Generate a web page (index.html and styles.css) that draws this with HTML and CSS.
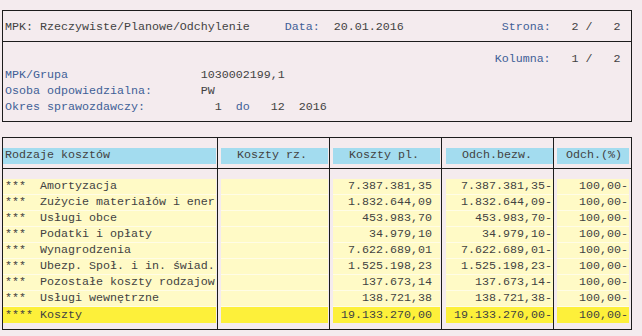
FILE: index.html
```html
<!DOCTYPE html>
<html lang="pl">
<head>
<meta charset="utf-8">
<title>MPK: Rzeczywiste/Planowe/Odchylenie</title>
<link rel="stylesheet" href="styles.css">
</head>
<body>
<section class="hdr">
  <div class="hdr-title"><span>MPK: Rzeczywiste/Planowe/Odchylenie     </span><span class="lbl">Data:</span><span>  20.01.2016              </span><span class="lbl">Strona:</span><span>   2 /   2</span></div>
  <div class="hdr-body">
    <div class="line"><span>                                                                      </span><span class="lbl">Kolumna:</span><span>   1 /   2</span></div>
    <div class="line"><span class="lbl">MPK/Grupa                   </span><span>1030002199,1</span></div>
    <div class="line"><span class="lbl">Osoba odpowiedzialna:       </span><span>PW</span></div>
    <div class="line"><span class="lbl">Okres sprawozdawczy:</span><span>          1  </span><span class="lbl">do</span><span>   12  2016</span></div>
  </div>
</section>

<table class="rep">
  <thead>
    <tr>
      <th class="c1"><div class="cell hd">Rodzaje kosztów</div></th>
      <th class="c2"><div class="cell hd">  Koszty rz.</div></th>
      <th class="c3"><div class="cell hd">  Koszty pl.</div></th>
      <th class="c4"><div class="cell hd">  Odch.bezw.</div></th>
      <th class="c5"><div class="cell hd"> Odch.(%)</div></th>
    </tr>
  </thead>
  <tbody>
    <tr><td class="c1"><div class="cell">***  Amortyzacja</div></td><td class="c2"><div class="cell"></div></td><td class="c3"><div class="cell num">7.387.381,35 </div></td><td class="c4"><div class="cell num">7.387.381,35-</div></td><td class="c5"><div class="cell num">100,00-</div></td></tr>
    <tr><td class="c1"><div class="cell">***  Zużycie materiałów i ener</div></td><td class="c2"><div class="cell"></div></td><td class="c3"><div class="cell num">1.832.644,09 </div></td><td class="c4"><div class="cell num">1.832.644,09-</div></td><td class="c5"><div class="cell num">100,00-</div></td></tr>
    <tr><td class="c1"><div class="cell">***  Usługi obce</div></td><td class="c2"><div class="cell"></div></td><td class="c3"><div class="cell num">453.983,70 </div></td><td class="c4"><div class="cell num">453.983,70-</div></td><td class="c5"><div class="cell num">100,00-</div></td></tr>
    <tr><td class="c1"><div class="cell">***  Podatki i opłaty</div></td><td class="c2"><div class="cell"></div></td><td class="c3"><div class="cell num">34.979,10 </div></td><td class="c4"><div class="cell num">34.979,10-</div></td><td class="c5"><div class="cell num">100,00-</div></td></tr>
    <tr><td class="c1"><div class="cell">***  Wynagrodzenia</div></td><td class="c2"><div class="cell"></div></td><td class="c3"><div class="cell num">7.622.689,01 </div></td><td class="c4"><div class="cell num">7.622.689,01-</div></td><td class="c5"><div class="cell num">100,00-</div></td></tr>
    <tr><td class="c1"><div class="cell">***  Ubezp. Społ. i in. świad.</div></td><td class="c2"><div class="cell"></div></td><td class="c3"><div class="cell num">1.525.198,23 </div></td><td class="c4"><div class="cell num">1.525.198,23-</div></td><td class="c5"><div class="cell num">100,00-</div></td></tr>
    <tr><td class="c1"><div class="cell">***  Pozostałe koszty rodzajow</div></td><td class="c2"><div class="cell"></div></td><td class="c3"><div class="cell num">137.673,14 </div></td><td class="c4"><div class="cell num">137.673,14-</div></td><td class="c5"><div class="cell num">100,00-</div></td></tr>
    <tr><td class="c1"><div class="cell">***  Usługi wewnętrzne</div></td><td class="c2"><div class="cell"></div></td><td class="c3"><div class="cell num">138.721,38 </div></td><td class="c4"><div class="cell num">138.721,38-</div></td><td class="c5"><div class="cell num">100,00-</div></td></tr>
    <tr class="tot"><td class="c1"><div class="cell">**** Koszty</div></td><td class="c2"><div class="cell"></div></td><td class="c3"><div class="cell num">19.133.270,00 </div></td><td class="c4"><div class="cell num">19.133.270,00-</div></td><td class="c5"><div class="cell num">100,00-</div></td></tr>
  </tbody>
</table>
</body>
</html>
```

FILE: styles.css
```css
html, body {
  margin: 0;
  background: #f4ebee;
}

body {
  padding: 10px 0 0 2px;
  font-family: "Liberation Mono", "DejaVu Sans Mono", monospace;
  font-size: 11.667px;
  color: #424242;
}

.hdr {
  width: 630px;
  box-sizing: border-box;
  border: 1px solid #1c1c1c;
}

.hdr-title {
  padding: 8px 0 6px 2px;
  line-height: 16px;
  height: 16px;
  white-space: pre;
  border-bottom: 1px solid #1c1c1c;
}

.hdr-body {
  padding: 9px 0 6px 2px;
}

.line {
  height: 16px;
  line-height: 16px;
  white-space: pre;
}

.lbl {
  color: #3f5f97;
}

.rep {
  margin-top: 15px;
  border-collapse: separate;
  border-spacing: 0;
  border: 1px solid #1c1c1c;
  table-layout: fixed;
}

.rep th, .rep td {
  padding: 0;
  border-left: 1px solid #1c1c1c;
  vertical-align: top;
  font-weight: normal;
  text-align: left;
}

.rep th.c1, .rep td.c1 {
  border-left: 0;
}

.rep thead th {
  padding: 10px 0 4px;
  border-bottom: 1px solid #1c1c1c;
}

.rep tbody tr:first-child td {
  padding-top: 10px;
}

.rep tbody tr:last-child td {
  padding-bottom: 6px;
}

.c1 { width: 214px; }
.c2, .c3, .c4 { width: 111px; }
.c5 { width: 77px; }

.cell {
  height: 15px;
  line-height: 15px;
  padding: 0 1px 0 2px;
  white-space: pre;
  overflow: hidden;
  background: #fffac6;
  border-bottom: 1px solid #fffce6;
}

.c1 .cell { margin: 0 1px 0 0; }
.c2 .cell, .c3 .cell { margin: 0 1px 0 3px; }
.c4 .cell { margin: 0 0 0 4px; }
.c5 .cell { margin: 0 2px 0 3px; }

.cell.hd {
  background: #a3dcef;
  border-bottom-color: transparent;
}

.cell.num {
  text-align: right;
}

.tot .cell {
  background: #fdf03a;
  height: 16px;
  line-height: 16px;
  border-bottom: 0;
}
```
